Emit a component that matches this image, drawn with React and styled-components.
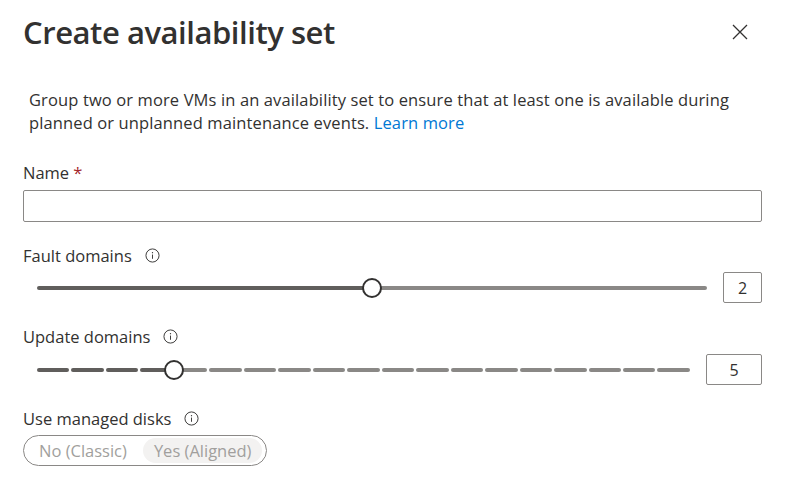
import React from 'react';
import styled, { createGlobalStyle } from 'styled-components';

const GlobalStyle = createGlobalStyle`
  body {
    margin: 0;
    background: #fff;
    font-family: "Open Sans", "Noto Sans", sans-serif;
    color: #323130;
  }
`;

const Panel = styled.div`
  width: 785px;
  height: 490px;
  box-sizing: border-box;
  padding: 0 23px;
  overflow: hidden;
`;

const Header = styled.div`
  display: flex;
  align-items: center;
  justify-content: space-between;
  height: 64px;
`;

const Title = styled.h1`
  margin: 0;
  font-size: 31px;
  font-weight: 600;
  letter-spacing: -0.45px;
`;

const CloseButton = styled.button`
  border: none;
  background: none;
  padding: 0;
  margin-right: 13px;
  width: 18px;
  height: 18px;
  display: flex;
  align-items: center;
  justify-content: center;
`;

const Description = styled.p`
  margin: 24px 0 0 6px;
  font-size: 16.5px;
  line-height: 23px;
  letter-spacing: 0.12px;
`;

const Link = styled.a`
  color: #0078d4;
  text-decoration: none;
`;

const Field = styled.div`
  margin-top: ${({ $top }) => $top}px;
`;

const Label = styled.div`
  display: flex;
  align-items: center;
  gap: 13px;
  font-size: 16.5px;
  height: 22px;
`;

const Required = styled.span`
  color: #a4262c;
  margin-left: -9px;
`;

const TextInput = styled.input`
  display: block;
  box-sizing: border-box;
  width: 100%;
  height: 32px;
  margin-top: 7px;
  border: 1px solid #8a8886;
  border-radius: 2px;
`;

const SliderRow = styled.div`
  display: flex;
  align-items: center;
  margin-top: ${({ $top }) => $top}px;
`;

const Track = styled.div`
  position: relative;
  flex: 1;
  height: 4px;
  margin: 0 ${({ $gap }) => $gap}px 0 14px;
  display: flex;
  gap: 2px;
`;

const Segment = styled.div`
  flex: 1;
  height: 4px;
  border-radius: 2px;
  background: ${({ $active }) => ($active ? '#605e5c' : '#8a8886')};
`;

const Thumb = styled.div`
  position: absolute;
  top: 50%;
  width: 16px;
  height: 16px;
  border: 2px solid #323130;
  border-radius: 50%;
  background: #fff;
  transform: translate(-50%, -50%);
`;

const ValueBox = styled.div`
  box-sizing: border-box;
  width: ${({ $w }) => $w}px;
  height: 31px;
  border: 1px solid #8a8886;
  border-radius: 2px;
  display: flex;
  align-items: center;
  justify-content: center;
  font-size: 16px;
`;

const Toggle = styled.div`
  display: inline-flex;
  align-items: center;
  gap: 5px;
  margin-top: 6px;
  height: 31px;
  box-sizing: border-box;
  padding: 0 4px;
  border: 1px solid #8a8886;
  border-radius: 16px;
`;

const Option = styled.span`
  font-size: 16.5px;
  color: #a19f9d;
  padding: 0 11px;
  height: 25px;
  line-height: 25px;
  border-radius: 13px;
  background: ${({ $selected }) => ($selected ? '#f3f2f1' : 'transparent')};
`;

function InfoIcon() {
  return (
    <svg width="15" height="15" viewBox="0 0 16 16" fill="none">
      <circle cx="8" cy="8" r="7" stroke="#323130" strokeWidth="1" />
      <line x1="8" y1="7" x2="8" y2="11.5" stroke="#323130" strokeWidth="1" />
      <circle cx="8" cy="5" r="0.7" fill="#323130" />
    </svg>
  );
}

function Slider({ min, max, value, gap, top, boxWidth, segmented }) {
  const count = segmented ? max - min : 1;
  const pct = ((value - min) / (max - min)) * 100;
  const segs = Array.from({ length: count }, (_, i) => i);
  return (
    <SliderRow $top={top}>
      <Track $gap={gap}>
        {segmented ? (
          segs.map((i) => <Segment key={i} $active={i < value - min} />)
        ) : (
          <>
            <Segment $active style={{ flex: pct }} />
            <Segment style={{ flex: 100 - pct, marginLeft: -4 }} />
          </>
        )}
        <Thumb style={{ left: `${pct}%` }} />
      </Track>
      <ValueBox $w={boxWidth}>{value}</ValueBox>
    </SliderRow>
  );
}

export default function App() {
  return (
    <>
      <GlobalStyle />
      <Panel>
        <Header>
          <Title>Create availability set</Title>
          <CloseButton aria-label="Close">
            <svg width="16" height="16" viewBox="0 0 16 16">
              <path d="M1 1 L15 15 M15 1 L1 15" stroke="#323130" strokeWidth="1.3" />
            </svg>
          </CloseButton>
        </Header>
        <Description>
          Group two or more VMs in an availability set to ensure that at least one is available during
          planned or unplanned maintenance events. <Link href="#">Learn more</Link>
        </Description>

        <Field $top={27}>
          <Label>
            Name <Required>*</Required>
          </Label>
          <TextInput />
        </Field>

        <Field $top={22}>
          <Label>
            Fault domains <InfoIcon />
          </Label>
        </Field>
        <Slider min={1} max={3} value={2} gap={16} top={6} boxWidth={39} />

        <Field $top={22}>
          <Label>
            Update domains <InfoIcon />
          </Label>
        </Field>
        <Slider min={1} max={20} value={5} gap={16} top={7} boxWidth={56} segmented />

        <Field $top={22}>
          <Label>
            Use managed disks <InfoIcon />
          </Label>
          <Toggle>
            <Option>No (Classic)</Option>
            <Option $selected>Yes (Aligned)</Option>
          </Toggle>
        </Field>
      </Panel>
    </>
  );
}
